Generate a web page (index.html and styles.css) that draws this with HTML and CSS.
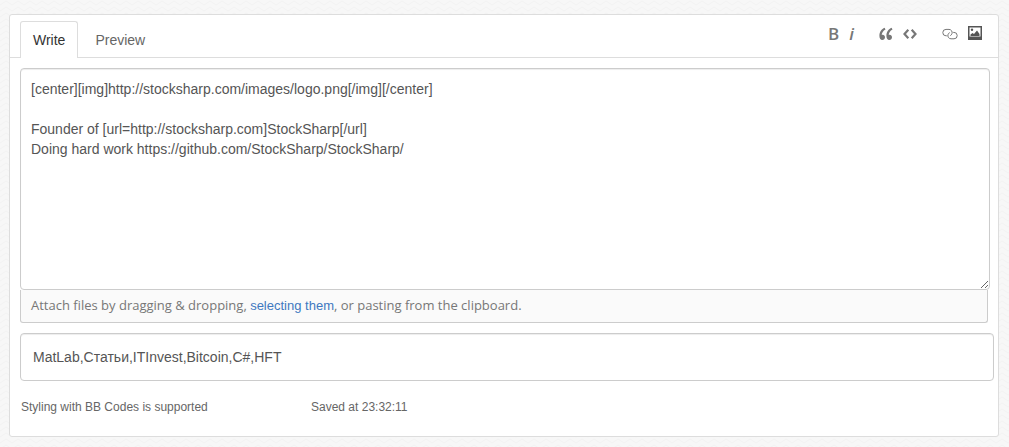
FILE: index.html
```html
<!DOCTYPE html>
<html lang="en">
<head>
<meta charset="utf-8">
<title>Edit post</title>
<link rel="stylesheet" href="styles.css">
</head>
<body>
<form class="editor">
  <header class="editor-head">
    <nav class="tabs">
      <button type="button" class="tab tab-active">Write</button>
      <button type="button" class="tab">Preview</button>
    </nav>
    <div class="toolbar">
      <div class="tool-group">
        <button type="button" class="tool bold" aria-label="Bold">B</button>
        <button type="button" class="tool italic" aria-label="Italic">i</button>
      </div>
      <div class="tool-group">
        <button type="button" class="tool" aria-label="Quote"><svg width="14" height="14" viewBox="0 0 14 14" fill="currentColor"><path d="M5.600.8C2.600 1.900.4 5 .4 8.800c0 2.500 1 4.200 2.900 4.200 1.600 0 2.700-1.200 2.700-2.700S5 7.700 3.600 7.700c-.5 0-.8.1-.9.2.1-2 1.500-4.300 3.800-5.500zM12.600.8C9.600 1.900 7.400 5 7.400 8.800c0 2.500 1 4.200 2.900 4.200 1.600 0 2.700-1.200 2.700-2.700s-1-2.600-2.400-2.600c-.5 0-.8.1-.9.2.1-2 1.500-4.300 3.800-5.500z"/></svg></button>
        <button type="button" class="tool" aria-label="Code"><svg width="14" height="14" viewBox="0 0 14 14" fill="none" stroke="currentColor" stroke-width="2.200"><path d="M5.300 2.700 1.500 7l3.800 4.300M8.700 2.700l3.800 4.300-3.800 4.300"/></svg></button>
      </div>
      <div class="tool-group">
        <button type="button" class="tool" aria-label="Link"><svg width="16" height="14" viewBox="0 0 16 14" fill="none" stroke="currentColor"><path d="M4.800 8.800H4a3.200 3.200 0 0 1 0-6.400h3a3.200 3.200 0 0 1 3 4.200c-.3 1-1 1.700-1.700 2M11.200 5.400h.8a3.200 3.200 0 0 1 0 6.400H9a3.200 3.200 0 0 1-3-4.200c.3-1 1-1.700 1.700-2"/></svg></button>
        <button type="button" class="tool picture" aria-label="Image"><svg width="14" height="14" viewBox="0 0 14 14"><path fill="currentColor" fill-rule="evenodd" d="M0 0h14v14H0zM1.500 1.500v9h11v-9z"/><path fill="currentColor" d="M2.500 10V8.500l2-1.500L6 8l3-3.500L11.500 8v2z"/><circle cx="4" cy="3.800" r="1.200" fill="currentColor"/></svg></button>
      </div>
    </div>
  </header>
  <div class="editor-body">
    <textarea class="message" aria-label="Message">[center][img]http://stocksharp.com/images/logo.png[/img][/center]

Founder of [url=http://stocksharp.com]StockSharp[/url]
Doing hard work https://github.com/StockSharp/StockSharp/</textarea>
    <p class="attach">Attach files by dragging &amp; dropping, <a href="#">selecting them</a>, or pasting from the clipboard.</p>
    <input class="tags" type="text" aria-label="Tags" value="MatLab,Статьи,ITInvest,Bitcoin,C#,HFT">
    <footer class="notes">
      <span>Styling with BB Codes is supported</span>
      <span>Saved at 23:32:11</span>
    </footer>
  </div>
</form>
</body>
</html>
```
FILE: styles.css
```css
* { box-sizing: border-box; }
body {
  margin: 0;
  padding: 14px 10px 10px 9px;
  background: #f7f7f7 url("data:image/svg+xml,%3Csvg xmlns='http://www.w3.org/2000/svg' width='12' height='6'%3E%3Cpath d='M0 5l6-4 6 4' fill='none' stroke='%23f2f2f2'/%3E%3C/svg%3E");
  color: #555;
  font: 14px/20px "Liberation Sans", Arial, sans-serif;
}
.editor {
  background: #fff;
  border: 1px solid #ddd;
  border-radius: 3px;
}
.editor-head {
  display: flex;
  justify-content: space-between;
  align-items: flex-end;
  padding: 6px 16px 0 10px;
  border-bottom: 1px solid #ddd;
}
.tabs { display: flex; gap: 4px; margin-bottom: -1px; }
.tab {
  padding: 8px 12px;
  border: 1px solid transparent;
  border-bottom: 0;
  border-radius: 3px 3px 0 0;
  background: none;
  color: #666;
  font: inherit;
}
.tab-active { background: #fff; border-color: #ddd; color: #333; }
.toolbar { display: flex; align-self: flex-start; gap: 25px; }
.tool-group { display: flex; gap: 10px; }
.tool {
  display: flex;
  align-items: center;
  justify-content: center;
  height: 26px;
  padding: 0;
  border: 0;
  background: none;
  color: #777;
}
.bold { font: 600 17px/26px "Open Sans", sans-serif; }
.italic { font: italic 600 17px/26px "Open Sans", sans-serif; }
.picture { align-items: flex-start; padding-top: 5px; color: #555; }
.editor-body { padding: 10px 4px 19px 10px; }
.message {
  display: block;
  width: calc(100% - 4px);
  height: 222px;
  padding: 10px;
  border: 1px solid #ccc;
  border-radius: 4px;
  background: #fff;
  box-shadow: inset 0 1px 1px rgba(0, 0, 0, .075);
  color: #555;
  font: inherit;
}
.attach {
  margin: 0 6px 10px 0;
  padding: 5px 10px 6px;
  border: 1px solid #ccc;
  border-top: 0;
  border-radius: 0 0 3px 3px;
  background: #fafafa;
  color: #777;
  font: 13px/20px "Trebuchet MS", "Open Sans", sans-serif;
}
.attach a {
  color: #4078c0;
  font-family: "Liberation Sans", Arial, sans-serif;
  text-decoration: none;
}
.tags {
  display: block;
  width: 100%;
  height: 48px;
  padding: 6px 12px;
  border: 1px solid #ccc;
  border-radius: 4px;
  box-shadow: inset 0 1px 1px rgba(0, 0, 0, .075);
  color: #555;
  font: inherit;
}
.notes {
  display: grid;
  grid-template-columns: 290px 1fr;
  padding: 16px 1px 0;
  color: #666;
  font-size: 12px;
}
```
